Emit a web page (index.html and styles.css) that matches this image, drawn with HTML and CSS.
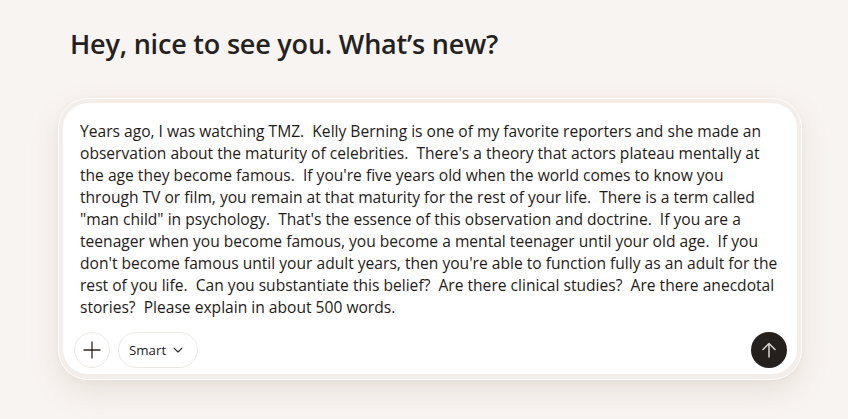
FILE: index.html
```html
<!DOCTYPE html>
<html>
<head>
<meta charset="utf-8">
<link rel="stylesheet" href="styles.css">
</head>
<body>
<main class="page">
  <h1 class="greeting">Hey, nice to see you. What’s new?</h1>
  <div class="composer-shell">
    <div class="composer">
      <p class="message">Years ago, I was watching TMZ.&nbsp; Kelly Berning is one of my favorite reporters and she made an observation about the maturity of celebrities.&nbsp; There's a theory that actors plateau mentally at the age they become famous.&nbsp; If you're five years old when the world comes to know you through TV or film, you remain at that maturity for the rest of your life.&nbsp; There is a term called "man child" in psychology.&nbsp; That's the essence of this observation and doctrine.&nbsp; If you are a teenager when you become famous, you become a mental teenager until your old age.&nbsp; If you don't become famous until your adult years, then you're able to function fully as an adult for the rest of you life.&nbsp; Can you substantiate this belief?&nbsp; Are there clinical studies?&nbsp; Are there anecdotal stories?&nbsp; Please explain in about 500 words.</p>
      <div class="toolbar">
        <div class="tools-left">
          <button class="icon-btn" aria-label="Add">
            <svg width="20" height="20" viewBox="0 0 20 20"><path d="M10 2v16M2 10h16" stroke="#2a2623" stroke-width="1.3" stroke-linecap="round" fill="none"/></svg>
          </button>
          <button class="mode-btn">Smart
            <svg width="12" height="12" viewBox="0 0 12 12"><path d="M2 4.2l4 3.8 4-3.8" stroke="#2a2623" stroke-width="1.1" fill="none" stroke-linecap="round" stroke-linejoin="round"/></svg>
          </button>
        </div>
        <button class="send-btn" aria-label="Send">
          <svg width="20" height="20" viewBox="0 0 20 20"><path d="M10 17V3.5M4 9.5l6-6 6 6" stroke="#d9d4cf" stroke-width="1.5" fill="none" stroke-linecap="round" stroke-linejoin="round"/></svg>
        </button>
      </div>
    </div>
  </div>
</main>
</body>
</html>
```
FILE: styles.css
```css
html, body {
  margin: 0;
  padding: 0;
}
body {
  background: #f8f4f1;
  font-family: "Open Sans", "Noto Sans", sans-serif;
  color: #1f1b18;
  width: 848px;
  height: 419px;
  overflow: hidden;
}
.page {
  padding: 27px 46px 0 58px;
}
.greeting {
  margin: 0 0 37px 12px;
  font-size: 27px;
  line-height: 34px;
  font-weight: 600;
  color: #25211e;
  letter-spacing: -0.2px;
}
.composer-shell {
  width: 744px;
  box-sizing: border-box;
  padding: 4px 4px 5px 4px;
  border-radius: 30px;
  background: #f3eee9;
  border: 1px solid #ffffff;
  box-shadow: 0 12px 30px rgba(150, 120, 90, 0.14), 0 2px 6px rgba(150, 120, 90, 0.06);
}
.composer {
  background: #ffffff;
  border-radius: 25px;
  padding: 17px 10px 6px 11px;
}
.message {
  margin: 0 6px 14px 6px;
  font-size: 15.6px;
  line-height: 22px;
  color: #1f1b18;
}
.toolbar {
  display: flex;
  align-items: center;
  justify-content: space-between;
}
.tools-left {
  display: flex;
  gap: 8px;
}
.icon-btn {
  width: 36px;
  height: 36px;
  border-radius: 50%;
  border: 1px solid #ece8e4;
  background: #fff;
  display: flex;
  align-items: center;
  justify-content: center;
  padding: 0;
}
.mode-btn {
  height: 36px;
  border-radius: 18px;
  border: 1px solid #ece8e4;
  background: #fff;
  display: flex;
  align-items: center;
  gap: 6px;
  padding: 0 13px 0 10px;
  font-family: inherit;
  font-size: 13.3px;
  color: #25211e;
}
.send-btn {
  width: 36px;
  height: 36px;
  border-radius: 50%;
  border: none;
  background: #25201d;
  display: flex;
  align-items: center;
  justify-content: center;
  padding: 0;
}
```
